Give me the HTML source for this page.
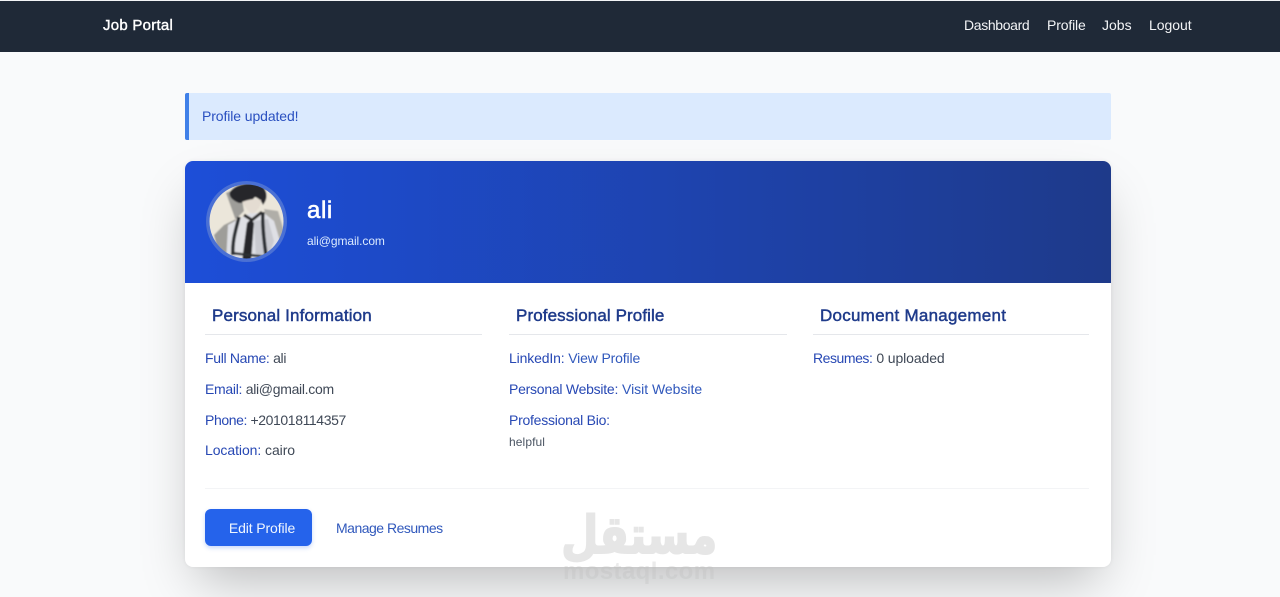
<!DOCTYPE html>
<html lang="en">
<head>
<meta charset="utf-8">
<title>Job Portal - Profile</title>
<style>
*{box-sizing:border-box;margin:0;padding:0}
html,body{width:1280px;height:597px;overflow:hidden;background:#f9fafb;font-family:"Liberation Sans",sans-serif;color:#374151}
a{text-decoration:none;color:inherit}
.t{position:absolute;white-space:nowrap;font-size:14px;line-height:18px}
nav{position:absolute;left:0;top:0;width:1280px;height:52px;background:#1f2937;border-top:1px solid #f3f4f6}
nav .t{color:#f3f4f6;top:15px}
.brand{left:103px;top:16px!important;font-size:15px!important;font-weight:400;-webkit-text-stroke:.4px #fff;color:#fff!important;letter-spacing:.25px}
.alert{position:absolute;left:185px;top:93px;width:926px;height:47px;background:#dbeafe;border-left:4px solid #4080e8;border-radius:2px}
.card{position:absolute;left:185px;top:161px;width:926px;height:406px;background:#fff;border-radius:8px;box-shadow:0 25px 50px -12px rgba(0,0,0,.25),0 0 4px rgba(0,0,0,.06)}
.hero{position:absolute;left:0;top:0;width:926px;height:122px;background:linear-gradient(90deg,#1d4ed8,#1e3a8a);border-radius:8px 8px 0 0}
.avatar{position:absolute;left:21px;top:20px;width:81px;height:81px;display:block}
.name{left:122px;top:35px;font-size:24px;line-height:30px;font-weight:400;-webkit-text-stroke:.6px #fff;color:#fff;letter-spacing:.6px}
.mail{left:122px;top:71px;font-size:12px;color:#dbeafe;letter-spacing:-.08px}
h2{position:absolute;top:145px;font-size:17px;line-height:20px;font-weight:400;-webkit-text-stroke:.45px #1e3a8a;color:#1e3a8a;white-space:nowrap}
.rule{position:absolute;top:173px;height:1px;background:#e5e7eb}
.l{color:#2748b4}
.v{color:#3f4856}
.link{color:#3058bc}
.btn{position:absolute;left:20px;top:348px;width:107px;height:37px;background:#2563eb;border-radius:6px;box-shadow:0 2px 4px rgba(37,99,235,.25);color:#eff6ff;font-size:14px;line-height:38px;text-align:center;padding-left:7px;letter-spacing:-.12px}
.wm{position:absolute;white-space:nowrap;color:#e6e6e6}
</style>
</head>
<body>
<nav>
<a class="t brand">Job Portal</a>
<a class="t" style="left:964px;letter-spacing:-.35px">Dashboard</a>
<a class="t" style="left:1047px;letter-spacing:-.15px">Profile</a>
<a class="t" style="left:1102px">Jobs</a>
<a class="t" style="left:1149px;letter-spacing:-.03px">Logout</a>
</nav>
<div class="alert"><span class="t" style="left:13px;top:14px;color:#2a50c0;letter-spacing:-.1px">Profile updated!</span></div>
<div class="card">
<div class="hero">
<svg class="avatar" viewBox="0 0 81 81">
<defs>
<clipPath id="c"><circle cx="40.5" cy="40.5" r="37"/></clipPath>
<filter id="b" x="-5%" y="-5%" width="110%" height="110%"><feGaussianBlur stdDeviation=".7"/></filter>
</defs>
<circle cx="40.5" cy="40.5" r="40.5" fill="#4a70d4"/>
<g clip-path="url(#c)">
<g filter="url(#b)">
<rect width="81" height="81" fill="#ebe6da"/>
<path d="M20 12L34 6 38 30 30 38 18 44 8 54 12 70 22 81H30V40z" fill="#9e9d99"/>
<path d="M58 28L72 30 78 50 74 60 64 50z" fill="#b0aea8"/>
<path d="M20 81L22 44 36 36 44 32 58 32 68 40 74 60 72 81z" fill="#dfe0e5"/>
<path d="M48 40L62 38 68 60 62 78 50 78z" fill="#c9cad0"/>
<path d="M24 11C30 1 52 0 58 7 62 13 61 19 57 24 55 19 52 17 49 16 45 21 38 22 33 22 28 20 22 16 24 11z" fill="#26282c"/>
<path d="M36 21C40 27 44 34 48 32 53 28 55 24 55 19 48 17 42 19 36 21z" fill="#e4dcd2"/>
<path d="M38 34L46 39 56 31" stroke="#2a2a2c" stroke-width="3" fill="none"/>
<path d="M45 38L48 42 45 80H36L41 42z" fill="#26282b"/>
<path d="M33 36C30 48 26 60 27 74" stroke="#2c2e31" stroke-width="3.5" fill="none"/>
<path d="M57 31C56 44 58 60 60 74" stroke="#2c2e31" stroke-width="3.5" fill="none"/>
<path d="M25 72L62 76" stroke="#2c2e31" stroke-width="2.5" fill="none"/>
</g>
</g>
</svg>
<div class="t name">ali</div>
<div class="t mail">ali@gmail.com</div>
</div>

<h2 style="left:27px;letter-spacing:.15px">Personal Information</h2>
<div class="rule" style="left:20px;width:277px"></div>
<div class="t" style="left:20px;top:188px;letter-spacing:-.32px"><span class="l">Full Name:</span> <span class="v">ali</span></div>
<div class="t" style="left:20px;top:219px;letter-spacing:-.3px"><span class="l">Email:</span> <span class="v">ali@gmail.com</span></div>
<div class="t" style="left:20px;top:250px;letter-spacing:-.4px"><span class="l">Phone:</span> <span class="v">+201018114357</span></div>
<div class="t" style="left:20px;top:280px;letter-spacing:-.07px"><span class="l">Location:</span> <span class="v">cairo</span></div>

<h2 style="left:331px;letter-spacing:.1px">Professional Profile</h2>
<div class="rule" style="left:324px;width:278px"></div>
<div class="t" style="left:324px;top:188px;letter-spacing:-.15px"><span class="l">LinkedIn:</span> <a class="link">View Profile</a></div>
<div class="t" style="left:324px;top:219px"><span class="l" style="letter-spacing:-.25px">Personal Website:</span> <a class="link" style="letter-spacing:-.02px">Visit Website</a></div>
<div class="t" style="left:324px;top:250px;letter-spacing:-.25px"><span class="l">Professional Bio:</span></div>
<div class="t" style="left:324px;top:272px;font-size:12px;color:#4b5563;letter-spacing:.1px">helpful</div>

<h2 style="left:635px;letter-spacing:.25px">Document Management</h2>
<div class="rule" style="left:628px;width:276px"></div>
<div class="t" style="left:628px;top:188px"><span class="l" style="letter-spacing:-.45px">Resumes:</span> <span class="v" style="letter-spacing:-.1px">0 uploaded</span></div>

<div class="rule" style="left:20px;top:327px;width:884px;background:#f3f4f6"></div>
<a class="btn">Edit Profile</a>
<a class="t link" style="left:151px;top:358px;letter-spacing:-.5px">Manage Resumes</a>
</div>
<div class="wm" style="right:563px;top:496px;font-family:'DejaVu Sans',sans-serif;font-weight:700;font-size:52px;line-height:80px;direction:rtl;transform:scaleX(.82);transform-origin:100% 50%;-webkit-text-stroke:2px #e6e6e6">مستقل</div>
<div class="wm" style="left:563px;top:558px;font-family:'Liberation Sans',sans-serif;font-weight:700;font-size:24px;line-height:28px;letter-spacing:.4px;color:rgba(190,190,190,.3)">mostaql.com</div>
</body>
</html>
